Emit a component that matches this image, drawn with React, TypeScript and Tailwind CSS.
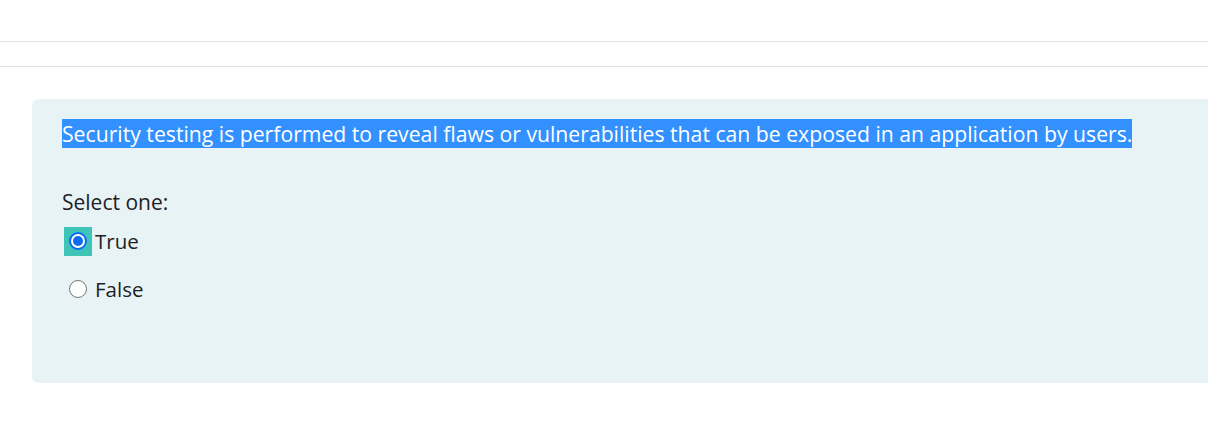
export default function App() {
  return (
    <div className="min-h-screen bg-white text-[#1d2125]" style={{ fontFamily: '"Open Sans", "Noto Sans", sans-serif' }}>
      <div className="h-[41px]" />
      <div className="h-[25px] border-t border-[#dee2e6]" />
      <div className="border-t border-[#dee2e6]" />
      <div className="pl-[32px] pt-[32px]">
        <div className="h-[284px] rounded-l-[6px] bg-[#e7f3f5] pl-[30px] pt-[18px]">
          <p className="text-[21.2px] leading-[34px]">
            <span className="bg-[#3390ff] text-white">
              Security testing is performed to reveal flaws or vulnerabilities that can be exposed in an application by users.
            </span>
          </p>
          <p className="mt-[34px] text-[21px] leading-[34px]">Select one:</p>
          <div className="mt-[7px] flex h-[30px] items-center">
            <span className="ml-[2px] flex h-[29px] w-[28px] items-center justify-center bg-[#3fc5b8]">
              <span className="flex h-[18px] w-[18px] items-center justify-center rounded-full border-[2px] border-[#0b6cf3] bg-white">
                <span className="h-[10px] w-[10px] rounded-full bg-[#0b6cf3]" />
              </span>
            </span>
            <span className="ml-[3px] text-[20.5px]">True</span>
          </div>
          <div className="mt-[18px] flex h-[30px] items-center">
            <span className="ml-[7px] h-[18px] w-[18px] rounded-full border border-[#767676] bg-white" />
            <span className="ml-[8px] text-[20.5px]">False</span>
          </div>
        </div>
      </div>
    </div>
  );
}
